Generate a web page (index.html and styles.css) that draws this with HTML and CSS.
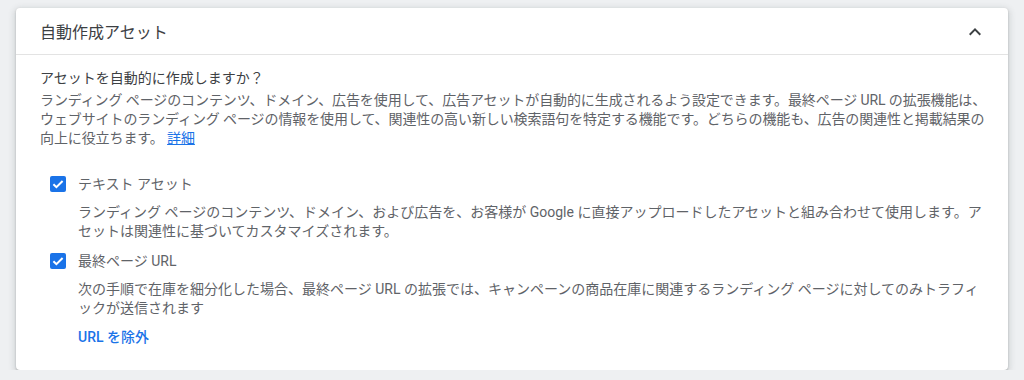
FILE: index.html
```html
<!DOCTYPE html>
<html lang="ja">
<head>
<meta charset="utf-8">
<link rel="stylesheet" href="styles.css">
</head>
<body>
<div class="card">
  <div class="card-header">
    <div class="title">自動作成アセット</div>
    <svg class="chevron" width="24" height="24" viewBox="0 0 24 24"><path d="M12 8l-6 6 1.41 1.41L12 10.83l4.59 4.58L18 14z" fill="#3c4043"/></svg>
  </div>
  <div class="card-body">
    <div class="question">アセットを自動的に作成しますか？</div>
    <div class="intro">ランディング ページのコンテンツ、ドメイン、広告を使用して、広告アセットが自動的に生成されるよう設定できます。最終ページ URL の拡張機能は、ウェブサイトのランディング ページの情報を使用して、関連性の高い新しい検索語句を特定する機能です。どちらの機能も、広告の関連性と掲載結果の向上に役立ちます。 <a class="link" href="#">詳細</a></div>

    <div class="option">
      <div class="option-row">
        <svg class="checkbox" width="16" height="16" viewBox="0 0 16 16"><rect width="16" height="16" rx="2" fill="#1a73e8"/><path d="M3.4 8.2l3 3 6.2-6.2" fill="none" stroke="#fff" stroke-width="2"/></svg>
        <span class="label">テキスト アセット</span>
      </div>
      <div class="desc">ランディング ページのコンテンツ、ドメイン、および広告を、お客様が Google に直接アップロードしたアセットと組み合わせて使用します。アセットは関連性に基づいてカスタマイズされます。</div>
    </div>

    <div class="option second">
      <div class="option-row">
        <svg class="checkbox" width="16" height="16" viewBox="0 0 16 16"><rect width="16" height="16" rx="2" fill="#1a73e8"/><path d="M3.4 8.2l3 3 6.2-6.2" fill="none" stroke="#fff" stroke-width="2"/></svg>
        <span class="label">最終ページ URL</span>
      </div>
      <div class="desc loose">次の手順で在庫を細分化した場合、最終ページ URL の拡張では、キャンペーンの商品在庫に関連するランディング ページに対してのみトラフィックが送信されます</div>
      <a class="action" href="#">URL を除外</a>
    </div>
  </div>
</div>
</body>
</html>
```

FILE: styles.css
```css
* { box-sizing: border-box; }
html, body {
  margin: 0;
  padding: 0;
  background: #eef0f2;
  font-family: Roboto, "Noto Sans CJK JP", sans-serif;
}
body {
  padding: 8px 16px 0 16px;
}
.card {
  background: #fff;
  border-radius: 4px;
  box-shadow: 0 1px 2px rgba(60,64,67,.3), 0 2px 6px 2px rgba(60,64,67,.15);
  height: 362px;
}
.card-header {
  height: 47px;
  display: flex;
  align-items: center;
  justify-content: space-between;
  padding: 0 21px 0 24px;
  border-bottom: 1px solid #e3e3e3;
}
.title {
  font-size: 16px;
  color: #3c4043;
}
.chevron { display: block; margin-top: 1px; }
.card-body {
  padding: 14px 16px 0 24px;
  font-size: 14px;
  line-height: 19px;
  color: #5f6368;
}
.question { color: #3c4043; margin-bottom: 3px; }
.intro { letter-spacing: -0.1px; }
.link { color: #1a73e8; text-decoration: underline; }
.option { margin-top: 24px; }
.option.second { margin-top: 8px; }
.option-row {
  display: flex;
  align-items: center;
  height: 24px;
  padding-left: 10px;
  gap: 12px;
}
.checkbox { display: block; flex: none; }
.label { color: #5f6368; font-size: 14px; }
.desc {
  margin-top: 7px;
  padding-left: 38px;
}
.desc.loose { line-break: anywhere; }
.action {
  display: block;
  margin-top: 10px;
  margin-left: 38px;
  color: #1a73e8;
  font-weight: 500;
  text-decoration: none;
}
```
